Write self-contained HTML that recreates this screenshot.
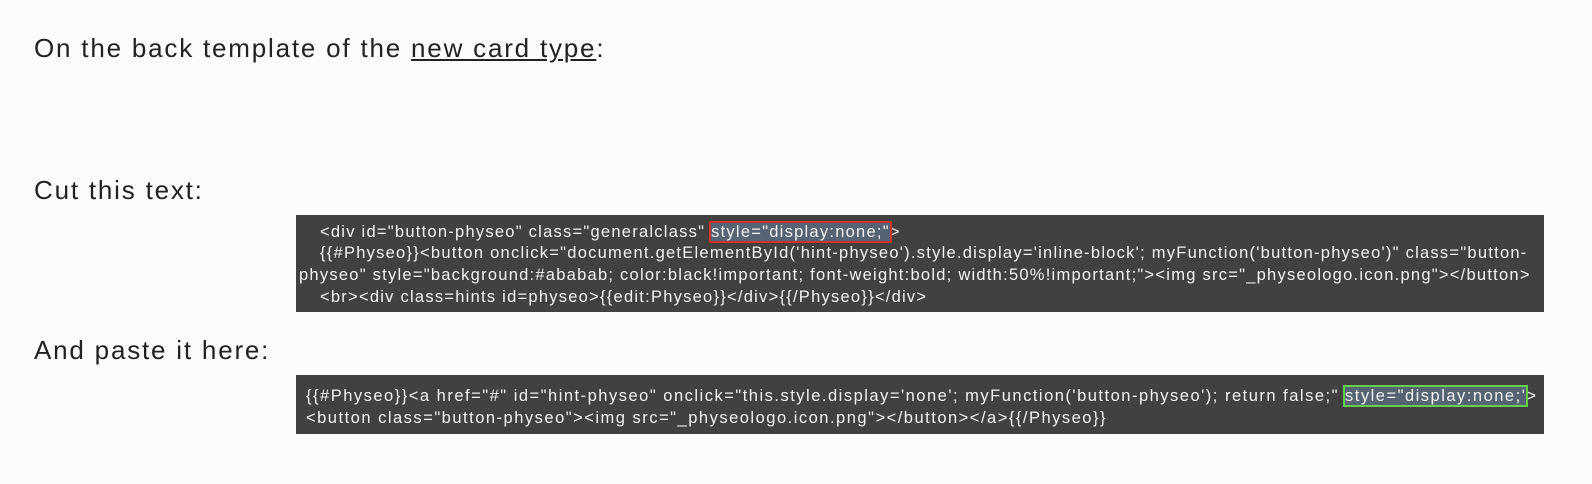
<!DOCTYPE html>
<html><head><meta charset="utf-8"><style>
body{margin:0;width:1592px;height:484px;background:#fbfbfb;font-family:"Liberation Sans",sans-serif;position:relative;overflow:hidden}
.h{position:absolute;left:34px;font-size:26px;color:#222;letter-spacing:1.8px;line-height:30px}
.box{position:absolute;left:296px;width:1248px;background:#414141;color:#f2f2f2;font-size:16.5px;letter-spacing:1.25px}
.l{position:absolute;white-space:nowrap;line-height:20px}
.hl{background:#566373;outline:2px solid #c8372d}
.hg{background:#566373;outline:2px solid #62d04a}
</style></head><body>
<div class="h" style="top:33px">On the back template of the <u>new card type</u>:</div>
<div class="h" style="top:175px">Cut this text:</div>
<div class="h" style="top:335px">And paste it here:</div>
<div class="box" style="top:215px;height:97px">
<div class="l" style="left:24px;top:7px">&lt;div id="button-physeo" class="generalclass" <span class="hl">style="display:none;"</span>&gt;</div>
<div class="l" style="left:24px;top:28px">{{#Physeo}}&lt;button onclick="document.getElementById('hint-physeo').style.display='inline-block'; myFunction('button-physeo')" class="button-</div>
<div class="l" style="left:3px;top:50px">physeo" style="background:#ababab; color:black!important; font-weight:bold; width:50%!important;"&gt;&lt;img src="_physeologo.icon.png"&gt;&lt;/button&gt;</div>
<div class="l" style="left:24px;top:72px">&lt;br&gt;&lt;div class=hints id=physeo&gt;{{edit:Physeo}}&lt;/div&gt;{{/Physeo}}&lt;/div&gt;</div>
</div>
<div class="box" style="top:375px;height:59px;letter-spacing:1.5px">
<div class="l" style="left:10px;top:11px">{{#Physeo}}&lt;a href="#" id="hint-physeo" onclick="this.style.display='none'; myFunction('button-physeo'); return false;" <span class="hg">style="display:none;'</span>&gt;</div>
<div class="l" style="left:10px;top:33px">&lt;button class="button-physeo"&gt;&lt;img src="_physeologo.icon.png"&gt;&lt;/button&gt;&lt;/a&gt;{{/Physeo}}</div>
</div>
</body></html>
